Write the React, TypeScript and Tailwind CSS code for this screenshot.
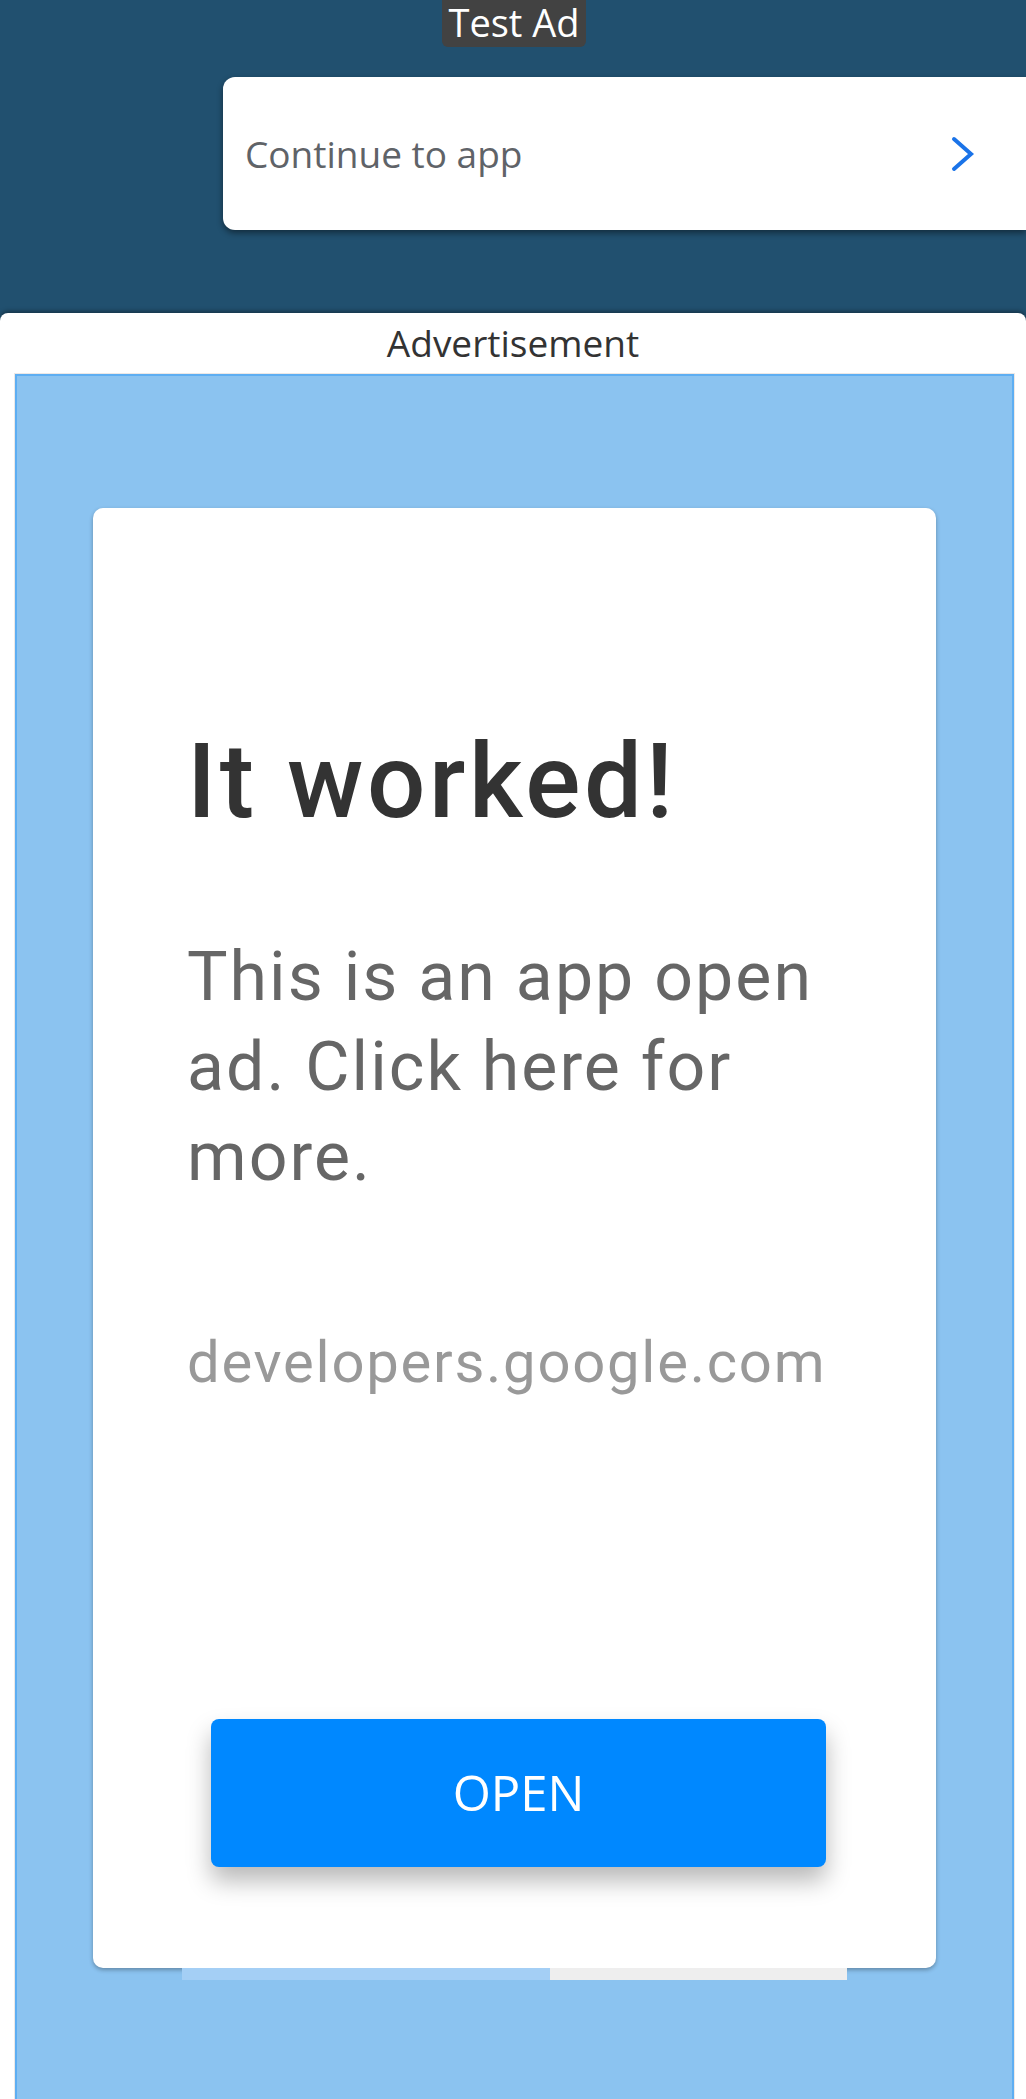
export default function App() {
  return (
    <div className="relative min-h-[2099px] bg-[#21506f] font-['Open_Sans',sans-serif]">
      {/* test ad badge */}
      <div className="absolute left-[442px] top-0 z-10 flex h-[47px] w-[144px] justify-center rounded-b-[6px] bg-[#424242] text-[38px] leading-[44px] text-white">
        Test Ad
      </div>

      <div className="h-[313px] pl-[223px] pt-[77px]">
        <div className="flex h-[153px] items-center justify-between rounded-l-[12px] bg-white pl-[22px] pr-[51px] shadow-[0_3px_6px_rgba(0,0,0,0.45)]">
          <span className="text-[37px] leading-[50px] text-[#5f6368]">Continue to app</span>
          <svg width="24" height="36" viewBox="0 0 24 36" fill="none">
            <polyline points="3,3 20,18 3,33" stroke="#1a73e8" strokeWidth="4" strokeLinecap="round" strokeLinejoin="miter" />
          </svg>
        </div>
      </div>

      <div className="flex min-h-[1786px] flex-col rounded-t-[8px] bg-white shadow-[0_-2px_4px_rgba(0,0,0,0.35)]">
        <div className="h-[60px] text-center text-[37px] leading-[60px] text-[#333333]">Advertisement</div>
        <div className="ml-[14px] mr-[11px] flex flex-1 flex-col border border-b-0 border-[#ece8e6]">
          <div className="flex flex-1 flex-col border-2 border-b-0 border-[#5eaef2] bg-[#8bc3f0]">
            <div className="ml-[76px] mt-[132px] flex w-[843px] flex-col rounded-[10px] bg-white pb-[101px] pt-[213px] shadow-[0_2px_4px_rgba(0,0,0,0.3)]">
              <div className="px-[94px]">
                <h1 className="font-['Roboto',sans-serif] text-[103px] font-medium leading-[122px] tracking-[0.035em] text-[#333333]">
                  It worked!
                </h1>
                <p className="mt-[89px] font-['Roboto',sans-serif] text-[68px] leading-[90px] tracking-[0.03em] text-[#666666]">
                  This is an app open ad. Click here for more.
                </p>
                <p className="mt-[125px] font-['Roboto',sans-serif] text-[58px] leading-[70px] tracking-[0.03em] text-[#999999]">
                  developers.google.com
                </p>
              </div>
              <button className="ml-[118px] mt-[322px] flex h-[148px] w-[615px] items-center justify-center rounded-[8px] bg-[#0088ff] text-[49px] text-white shadow-[0_14px_24px_rgba(0,0,0,0.28)]">
                OPEN
              </button>
            </div>
            <div className="ml-[165px] flex h-[12px]">
              <div className="w-[368px] bg-[#a4cff5]" />
              <div className="w-[297px] bg-[#eeeeee]" />
            </div>
          </div>
        </div>
      </div>
    </div>
  );
}
